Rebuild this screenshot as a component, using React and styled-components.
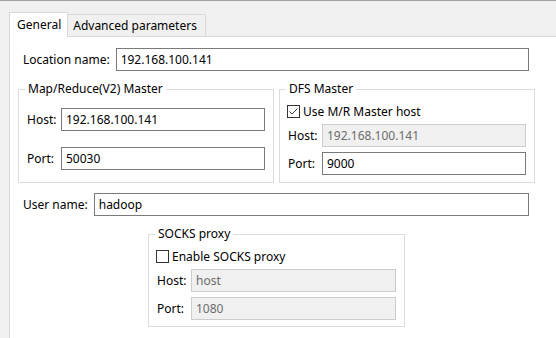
import React from 'react'
import styled, { createGlobalStyle } from 'styled-components'

const GlobalStyle = createGlobalStyle`
  html, body {
    margin: 0;
    padding: 0;
    background: #f0f0f0;
  }
  body {
    font-family: "Noto Sans", "Open Sans", sans-serif;
    font-size: 12px;
    color: #000;
  }
`

const Window = styled.div`
  width: 556px;
  height: 338px;
  overflow: hidden;
  border-top: 1px solid #a0a0a0;
  box-sizing: border-box;
  background: #f0f0f0;
`

const TabStrip = styled.div`
  display: flex;
  align-items: flex-end;
  height: 35px;
  padding-left: 9px;
`

const Tab = styled.div`
  position: relative;
  z-index: 1;
  box-sizing: border-box;
  display: flex;
  align-items: center;
  white-space: nowrap;
  border: 1px solid #d9d9d9;
  border-bottom: none;
  height: ${p => (p.$active ? '25px' : '22px')};
  margin-bottom: ${p => (p.$active ? '-1px' : '0')};
  padding: ${p => (p.$active ? '0 6px 2px 7px' : '0 8px 0 5px')};
  background: ${p => (p.$active ? '#fff' : '#f0f0f0')};
  & + & {
    border-left: none;
  }
`

const Panel = styled.div`
  background: #fff;
  border-top: 1px solid #d9d9d9;
  border-left: 1px solid #d9d9d9;
  margin-left: 9px;
  height: 302px;
  box-sizing: border-box;
  padding: 11px 21px 0 8px;
  display: flex;
  flex-direction: column;
`

const Row = styled.div`
  display: flex;
  align-items: center;
  gap: 6px;
  padding: 0 6px 0 5px;
  margin-bottom: ${p => p.$after || 0}px;
`

const Label = styled.span`
  white-space: nowrap;
`

const Input = styled.div`
  box-sizing: border-box;
  flex: 1;
  height: 23px;
  display: flex;
  align-items: center;
  padding: 0 4px;
  border: 1px solid ${p => (p.$disabled ? '#cccccc' : '#7a7a7a')};
  background: ${p => (p.$disabled ? '#f0f0f0' : '#fff')};
  color: ${p => (p.$disabled ? '#6d6d6d' : '#000')};
  white-space: nowrap;
  overflow: hidden;
`

const GroupRow = styled.div`
  display: grid;
  grid-template-columns: 256px 256px;
  column-gap: 5px;
  margin-bottom: 10px;
`

const Group = styled.fieldset`
  margin: 0 0 0 ${p => p.$indent || 0}px;
  width: ${p => p.$width || 'auto'};
  box-sizing: border-box;
  border: 1px solid #dcdcdc;
  padding: ${p => p.$pad};
  min-width: 0;
`

const Legend = styled.legend`
  margin-left: -2px;
  padding: 0 3px;
  line-height: 16px;
`

const Fields = styled.div`
  display: grid;
  grid-template-columns: 29px 1fr;
  column-gap: 5px;
  row-gap: ${p => p.$gap}px;
  align-items: center;
`

const CheckRow = styled.label`
  grid-column: 1 / 3;
  display: flex;
  align-items: center;
  gap: 3px;
  height: 16px;
  margin-left: -1px;
`

const Box = styled.span`
  box-sizing: border-box;
  width: 13px;
  height: 13px;
  border: 1px solid #333;
  background: #fff;
  display: inline-flex;
  align-items: center;
  justify-content: center;
`

const Check = ({ checked }) => (
  <Box>
    {checked && (
      <svg width="11" height="11" viewBox="0 0 11 11">
        <path d="M1.5 5.5 L4 8 L9.5 2.5" fill="none" stroke="#333" strokeWidth="1" />
      </svg>
    )}
  </Box>
)

const Field = ({ label, value, disabled }) => (
  <>
    <Label>{label}</Label>
    <Input $disabled={disabled}>{value}</Input>
  </>
)

export default function App() {
  return (
    <Window>
      <GlobalStyle />
      <TabStrip>
        <Tab $active>General</Tab>
        <Tab>Advanced parameters</Tab>
      </TabStrip>
      <Panel>
        <Row $after={10}>
          <Label>Location name:</Label>
          <Input>192.168.100.141</Input>
        </Row>
        <GroupRow>
          <Group $pad="11px 8px 12px 8px">
            <Legend>Map/Reduce(V2) Master</Legend>
            <Fields $gap={16}>
              <Field label="Host:" value="192.168.100.141" />
              <Field label="Port:" value="50030" />
            </Fields>
          </Group>
          <Group $pad="6px 8px 7px 8px">
            <Legend>DFS Master</Legend>
            <Fields $gap={5}>
              <CheckRow>
                <Check checked />
                Use M/R Master host
              </CheckRow>
              <Field label="Host:" value="192.168.100.141" disabled />
              <Field label="Port:" value="9000" />
            </Fields>
          </Group>
        </GroupRow>
        <Row $after={10}>
          <Label>User name:</Label>
          <Input>hadoop</Input>
        </Row>
        <Group $indent={130} $width="257px" $pad="6px 8px 6px 8px">
          <Legend>SOCKS proxy</Legend>
          <Fields $gap={5}>
            <CheckRow>
              <Check />
              Enable SOCKS proxy
            </CheckRow>
            <Field label="Host:" value="host" disabled />
            <Field label="Port:" value="1080" disabled />
          </Fields>
        </Group>
      </Panel>
    </Window>
  )
}
